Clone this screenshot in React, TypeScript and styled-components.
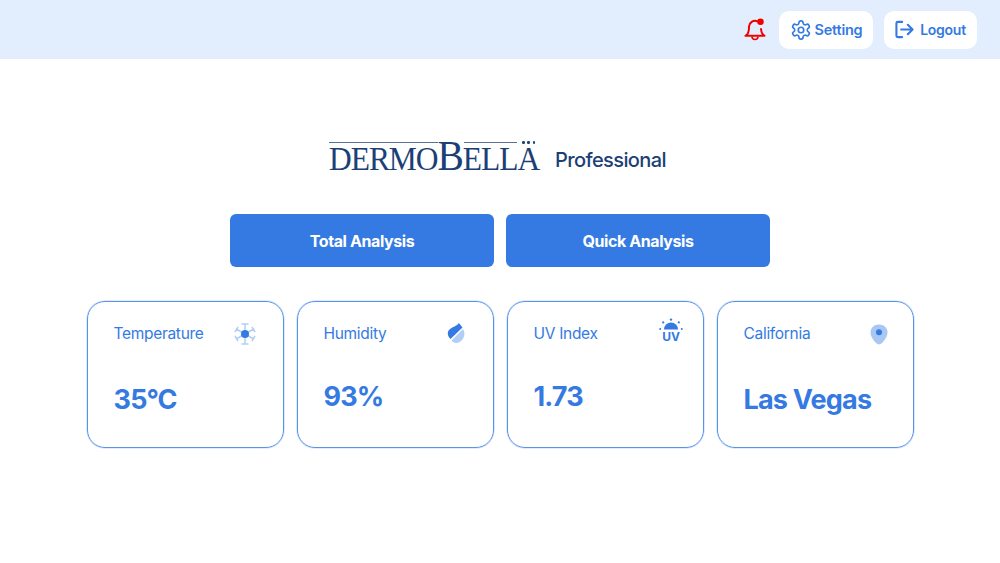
import React from "react";
import styled, { createGlobalStyle } from "styled-components";

const Global = createGlobalStyle`
  html, body { margin: 0; padding: 0; background: #fff; }
  body { font-family: Inter, "Liberation Sans", sans-serif; width: 1000px; height: 563px; overflow: hidden; }
`;

const Page = styled.div`
  display: flex;
  flex-direction: column;
  width: 1000px;
  height: 563px;
`;

const Header = styled.header`
  height: 59px;
  background: #e2eefd;
  display: flex;
  align-items: center;
  justify-content: flex-end;
  gap: 11px;
  padding: 0 23px 0 0;
  box-sizing: border-box;
`;

const Bell = styled.div`
  width: 24px;
  height: 24px;
  margin: 1px 1px 0 0;
  line-height: 0;
`;

const HeaderButton = styled.button<{ $w: number; $gap: number; $size: number; $lift: number }>`
  width: ${(p) => p.$w}px;
  height: 38px;
  border: 0;
  border-radius: 10px;
  background: #fff;
  color: #347ae2;
  font: 600 ${(p) => p.$size}px Inter, sans-serif;
  letter-spacing: -0.25px;
  display: flex;
  align-items: center;
  justify-content: center;
  gap: ${(p) => p.$gap}px;
  padding: 0 0 ${(p) => p.$lift}px;
`;

const Main = styled.main`
  display: flex;
  flex-direction: column;
  align-items: center;
  padding-top: 80px;
`;

const Brand = styled.div`
  display: flex;
  align-items: flex-end;
  height: 36px;
  width: 342px;
  gap: 16px;
`;

const Logo = styled.div`
  position: relative;
  width: 210px;
  height: 36px;
  flex: none;
  color: #1c3f75;
  white-space: nowrap;
`;

const LogoText = styled.div`
  font-family: "Liberation Serif", serif;
  line-height: 36px;
  font-size: 31.5px;
  letter-spacing: -1.05px;
  transform: scaleY(1.05);
  transform-origin: 0 32px;
`;

const LogoBig = styled.span`
  font-size: 39.5px;
`;

const LogoRule = styled.span<{ $l: number; $w: number }>`
  position: absolute;
  top: 3px;
  left: ${(p) => p.$l}px;
  width: ${(p) => p.$w}px;
  height: 1px;
  background: #5a7499;
`;

const LogoDots = styled.span`
  position: absolute;
  top: 2px;
  left: 193px;
  width: 13px;
  height: 3px;
  display: flex;
  justify-content: space-between;
  & > i {
    width: 2.5px;
    height: 2.5px;
    background: #1c3f75;
    border-radius: 50%;
  }
`;

const BrandLabel = styled.span`
  font: 500 20px/24px Inter, sans-serif;
  letter-spacing: -0.6px;
  color: #1c3f75;
  margin-bottom: 3px;
`;

const Actions = styled.div`
  display: flex;
  gap: 12px;
  margin-top: 39px;
`;

const Action = styled.button`
  width: 264px;
  height: 53px;
  border: 0;
  border-radius: 6px;
  background: #347ae2;
  color: #fff;
  font: 700 16px Inter, sans-serif;
  letter-spacing: -0.4px;
`;

const Cards = styled.section`
  display: flex;
  gap: 13px;
  margin-top: 34px;
`;

const Card = styled.article`
  width: 197px;
  height: 147px;
  box-sizing: border-box;
  border: 1px solid #5893ea;
  box-shadow: 0 0 0 0.6px rgba(88, 147, 234, 0.35);
  border-radius: 18px;
  padding: 21px 16px 0 26px;
  display: flex;
  flex-direction: column;
  color: #347ae2;
`;

const CardHead = styled.div`
  display: flex;
  justify-content: space-between;
  align-items: center;
  height: 22px;
`;

const CardLabel = styled.span`
  font: 400 15.5px/22px Inter, sans-serif;
  letter-spacing: -0.3px;
`;

const IconSlot = styled.span<{ $up: number; $right: number }>`
  line-height: 0;
  transform: translate(${(p) => -p.$right}px, ${(p) => p.$up}px);
`;

const Value = styled.div<{ $top: number }>`
  font: 700 27px/34px Inter, sans-serif;
  letter-spacing: -0.8px;
  margin-top: ${(p) => p.$top}px;
`;

const BellIcon = () => (
  <svg width="24" height="24" viewBox="0 0 24 24" fill="none">
    <path
      d="M14 3.200A6 6 0 0 0 6 8.500c0 4-.6 6.300-1.600 7.600-.5.7-1.200 1.200-1.900 1.700h19c-.9-.6-1.600-1.200-2.100-2-.7-1.100-1.200-2.800-1.400-4.800"
      stroke="#f00000"
      strokeWidth="2"
      strokeLinecap="round"
      strokeLinejoin="round"
    />
    <path d="M9 18.500a3 3 0 0 0 6 0" stroke="#f00000" strokeWidth="1.600" />
    <circle cx="17.500" cy="3.800" r="3.300" fill="#f00000" />
  </svg>
);

const GearIcon = () => (
  <svg width="22" height="22" viewBox="0 0 24 24" fill="none" stroke="#347ae2" strokeWidth="1.800" strokeLinecap="round" strokeLinejoin="round">
    <path d="M12.220 2h-.44a2 2 0 0 0-2 2v.18a2 2 0 0 1-1 1.730l-.43.25a2 2 0 0 1-2 0l-.15-.08a2 2 0 0 0-2.730.73l-.22.38a2 2 0 0 0 .73 2.730l.15.1a2 2 0 0 1 1 1.720v.51a2 2 0 0 1-1 1.740l-.15.09a2 2 0 0 0-.73 2.730l.22.38a2 2 0 0 0 2.730.73l.15-.08a2 2 0 0 1 2 0l.43.25a2 2 0 0 1 1 1.730V20a2 2 0 0 0 2 2h.44a2 2 0 0 0 2-2v-.18a2 2 0 0 1 1-1.730l.43-.25a2 2 0 0 1 2 0l.15.08a2 2 0 0 0 2.730-.73l.22-.39a2 2 0 0 0-.73-2.730l-.15-.08a2 2 0 0 1-1-1.740v-.5a2 2 0 0 1 1-1.740l.15-.09a2 2 0 0 0 .73-2.730l-.22-.38a2 2 0 0 0-2.730-.73l-.15.08a2 2 0 0 1-2 0l-.43-.25a2 2 0 0 1-1-1.730V4a2 2 0 0 0-2-2z" />
    <circle cx="12" cy="12" r="3" />
  </svg>
);

const LogoutIcon = () => (
  <svg width="19" height="19" viewBox="0 0 20 20" fill="none" stroke="#347ae2" strokeWidth="2.200" strokeLinecap="round" strokeLinejoin="round">
    <path d="M7.500 2H3a1.500 1.500 0 0 0-1.500 1.500v13A1.500 1.500 0 0 0 3 18h4.500" />
    <path d="M6.500 10h12M13.500 5l5 5-5 5" />
  </svg>
);

const SnowIcon = () => (
  <svg width="22" height="22" viewBox="0 0 22 22" fill="none" stroke="#b3cef5" strokeWidth="1.500" strokeLinecap="round" strokeLinejoin="round">
    <path d="M11 1v20M8 1h6M8 21h6" />
    <path d="M2.300 6 19.700 16M1.200 8.600 3.800 4.300M18.200 17.700l2.600-4.300" />
    <path d="M2.300 16 19.700 6M3.800 17.700 1.200 13.400M20.800 8.600l-2.600-4.300" />
    <circle cx="11" cy="11" r="4" fill="#347ae2" stroke="none" />
  </svg>
);

const DropIcon = () => (
  <svg width="18" height="21" viewBox="0 0 18 21">
    <path d="M11 1c.5-.6 1.200-.6 1.700 0l2.800 3.500L3.500 16C.5 13 0 9.500 2 7c1.800-2.200 6.500-3.500 9-6Z" fill="#347ae2" />
    <path d="M16 6c2 3 2 7.500-1 11-3 3.500-8 4-10.500.5Z" fill="#b3cef5" />
  </svg>
);

const UvText = styled.text`
  font: 700 12px Inter, sans-serif;
  fill: #347ae2;
`;

const UvIcon = () => (
  <svg width="24" height="24" viewBox="0 0 24 24" fill="#347ae2">
    <path d="M5 11.500a7 7 0 0 1 14 0Z" />
    <circle cx="12" cy="1.600" r="1.200" />
    <circle cx="4.200" cy="4.400" r="1.100" />
    <circle cx="19.800" cy="4.400" r="1.100" />
    <circle cx="1.200" cy="11" r="1" />
    <circle cx="22.800" cy="11" r="1" />
    <UvText x="12" y="22.500" textAnchor="middle">UV</UvText>
  </svg>
);

const PinIcon = () => (
  <svg width="18" height="21" viewBox="0 0 18 21">
    <path d="M9 .5c4.900 0 8.500 3.500 8.500 8 0 5-5 10.200-7 11.600-.9.600-2.100.6-3 0-2-1.400-7-6.600-7-11.600 0-4.500 3.600-8 8.500-8Z" fill="#a9c7f3" />
    <circle cx="9" cy="8.200" r="3" fill="#347ae2" />
  </svg>
);

const cards = [
  { label: "Temperature", value: "35°C", top: 38, icon: <SnowIcon />, up: 0, right: 11 },
  { label: "Humidity", value: "93%", top: 35, icon: <DropIcon />, up: -1, right: 12 },
  { label: "UV Index", value: "1.73", top: 35, icon: <UvIcon />, up: -4, right: 4 },
  { label: "California", value: "Las Vegas", top: 38, icon: <PinIcon />, up: 0, right: 9 },
];

export default function App() {
  return (
    <Page>
      <Global />
      <Header>
        <Bell><BellIcon /></Bell>
        <HeaderButton $w={94} $gap={3} $size={14.5} $lift={0}><GearIcon />Setting</HeaderButton>
        <HeaderButton $w={93} $gap={6} $size={14} $lift={1}><LogoutIcon />Logout</HeaderButton>
      </Header>
      <Main>
        <Brand>
          <Logo>
            <LogoRule $l={0} $w={109} />
            <LogoRule $l={135} $w={53} />
            <LogoDots><i /><i /><i /></LogoDots>
            <LogoText>DERMO<LogoBig>B</LogoBig>ELLA</LogoText>
          </Logo>
          <BrandLabel>Professional</BrandLabel>
        </Brand>
        <Actions>
          <Action>Total Analysis</Action>
          <Action>Quick Analysis</Action>
        </Actions>
        <Cards>
          {cards.map((c) => (
            <Card key={c.label}>
              <CardHead>
                <CardLabel>{c.label}</CardLabel>
                <IconSlot $up={c.up} $right={c.right}>{c.icon}</IconSlot>
              </CardHead>
              <Value $top={c.top}>{c.value}</Value>
            </Card>
          ))}
        </Cards>
      </Main>
    </Page>
  );
}
